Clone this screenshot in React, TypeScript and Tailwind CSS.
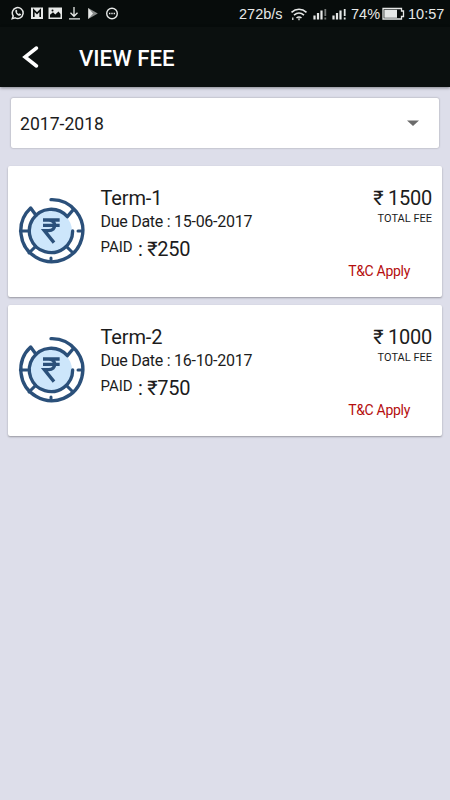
import React from "react";

type Fee = { term: string; due: string; paid: string; total: string };

const fees: Fee[] = [
  { term: "Term-1", due: "15-06-2017", paid: "250", total: "1500" },
  { term: "Term-2", due: "16-10-2017", paid: "750", total: "1000" },
];

function StatusBar() {
  return (
    <div className="flex h-[27px] items-center bg-[#070c0b] pl-[11px] pr-[6px] text-[#e6e8e7]">
      <svg width="110" height="15" viewBox="0 0 110 15" fill="none" className="shrink-0">
        <path d="M1.3 12.6 2.2 10A5.4 5.4 0 1 1 4.2 11.8Z" stroke="currentColor" strokeWidth="1.5" />
        <path d="M4.4 4.3c.8-.9 1.4-.5 2 .9l-.6.9c.5.9 1.2 1.5 2 1.9l.8-.7 1.6 1c-.3 1.5-1.7 1.7-3.1 1.1C5.200 8.500 4 6.500 4.400 4.300Z" fill="currentColor" />
        <path d="M20 1.500h12v11.500H20z" fill="currentColor" />
        <path d="M22.800 11V4.200L26 7.400l3.200-3.200V11" stroke="#070c0b" strokeWidth="1.6" />
        <path d="M37.500 1.500h13.500v11.500H37.500z" fill="currentColor" />
        <path d="M39 11.500V8.800l3-2.500 2.300 2.300 3.200-3.200 2 2.500v3.600z" fill="#070c0b" />
        <circle cx="41.500" cy="4.500" r="1" fill="#070c0b" />
        <path d="M63 1v9M59.500 6.800 63 10.300l3.500-3.500M58 12.800h11" stroke="currentColor" strokeWidth="1.3" />
        <path d="M77.300 2v11l9.500-5.500z" fill="#898c8b" />
        <path d="M77.300 2v11l4.700-5.500z" fill="currentColor" />
        <circle cx="101" cy="7.500" r="5.300" stroke="currentColor" strokeWidth="1.400" />
        <path d="M98 7.500h1.400m.9 0h1.400m.9 0h1.400" stroke="currentColor" strokeWidth="1.400" />
      </svg>
      <div className="ml-auto flex items-center font-['Liberation_Sans',sans-serif] text-[14.5px] leading-[18px]">
        <span className="w-[46px] whitespace-nowrap">272b/s</span>
        <svg width="66" height="16" viewBox="0 0 66 16" fill="none" className="shrink-0">
          <path d="M6.500 6.300c4.500-4 10.500-4 15 0M9 9.200c3-2.600 7-2.600 10 0M11.500 12c1.500-1.200 3.500-1.200 5 0" stroke="currentColor" strokeWidth="1.600" />
          <path d="M14 12.200v2M7.800 11.500v2.500" stroke="currentColor" strokeWidth="1.300" />
          <path d="M29.500 9.500v4M33 7V13.500M36.500 4.500V13.500M48.500 9.500v4M52 7V13.500M55.500 4.500V13.500" stroke="currentColor" strokeWidth="2.200" />
          <path d="M40.300 3v7m0 1.500v2" stroke="#777b79" strokeWidth="1.800" />
          <path d="M59.700 3v7m0 1.500v2" stroke="currentColor" strokeWidth="1.800" />
        </svg>
        <span className="w-[30px] whitespace-nowrap">74%</span>
        <svg width="27" height="14" viewBox="0 0 27 14" fill="none" className="shrink-0">
          <path d="M2 1.500H20.500v2.500h2v5.500h-2V12H2z" stroke="currentColor" strokeWidth="1.300" />
          <path d="M3.300 2.800h12.700v8H3.300z" fill="currentColor" />
        </svg>
        <span className="w-[36px] whitespace-nowrap">10:57</span>
      </div>
    </div>
  );
}

function CoinIcon() {
  return (
    <svg width="80" height="80" viewBox="0 0 240 240" fill="none" stroke="#2b507a" className="shrink-0">
      <circle cx="123" cy="123" r="63" fill="#cde6fb" stroke="none" />
      <path d="M123 29A93 93 0 1 1 62 54L78 76" strokeWidth="10" strokeLinecap="round" strokeLinejoin="round" />
      <path d="M188 123A65 65 0 1 1 172 80L189 60" strokeWidth="10" strokeLinecap="round" strokeLinejoin="round" />
      <path d="M31 123h27M204 123h10M123 204v10M77 169l-20 20M169 169l20 20" strokeWidth="9" strokeLinecap="round" />
      <path d="M99 90h50M99 106h50M99 90h17c24 0 24 32 0 32h-13l29 36" strokeWidth="10" />
    </svg>
  );
}

function FeeCard({ fee }: { fee: Fee }) {
  return (
    <article className="flex h-[131px] rounded-[2px] bg-white pl-[2px] pr-[10px] text-[#1c1c1c] shadow-[0_1px_2px_rgba(0,0,0,0.32)]">
      <div className="-ml-[0.5px] pt-[24px]">
        <CoinIcon />
      </div>
      <div className="ml-[11px] flex-1 whitespace-nowrap pt-[20px]">
        <h2 className="text-[20px] leading-[24px] tracking-[-0.15px]">{fee.term}</h2>
        <p className="mt-[2px] text-[16px] leading-[20px] tracking-[-0.270px]">Due Date : {fee.due}</p>
        <div className="mt-[4px] flex">
          <span className="w-[37.500px] text-[15px] leading-[22px]">PAID</span>
          <span className="pt-[1px] text-[20px] leading-[24px] tracking-[-0.300px]">: ₹{fee.paid}</span>
        </div>
      </div>
      <div className="flex flex-col items-end whitespace-nowrap pt-[20px]">
        <span className="text-[20px] leading-[24px] tracking-[-0.250px]">₹ {fee.total}</span>
        <span className="mt-px text-[11px] leading-[16px]">TOTAL FEE</span>
        <span className="mr-[22px] mt-[35px] text-[14px] leading-[18px] tracking-[-0.300px] text-[#b50e0e]">T&amp;C Apply</span>
      </div>
    </article>
  );
}

export default function App() {
  return (
    <div className="flex h-[800px] w-[450px] flex-col overflow-hidden bg-[#dddeea] font-['Roboto',sans-serif]">
      <StatusBar />
      <header className="flex h-[60px] shrink-0 items-center bg-[#0b100f] pl-[22px] text-white shadow-[0_1px_3px_rgba(0,0,0,0.4)]">
        <svg width="18" height="24" viewBox="0 0 18 24" fill="none">
          <path d="M14.500 3 3 12l11.500 9" stroke="currentColor" strokeWidth="3.500" strokeLinecap="round" strokeLinejoin="miter" />
        </svg>
        <h1 className="ml-[39px] mt-[2px] text-[22.200px] font-medium leading-[28px]">VIEW FEE</h1>
      </header>
      <main className="flex flex-col px-[8px] pt-[11px]">
        <button className="mx-[3px] flex h-[50px] items-center justify-between rounded-[2px] bg-white pl-[9px] pr-[20px] text-[17.600px] text-[#1c1c1c] shadow-[0_0_2px_rgba(0,0,0,0.35)]">
          <span className="pt-[2px]">2017-2018</span>
          <svg width="12" height="6" viewBox="0 0 12 6">
            <path d="M0 .5h12L6 6z" fill="#6b6b6b" />
          </svg>
        </button>
        <section className="mt-[18px] flex flex-col gap-[8px]">
          {fees.map((fee) => (
            <FeeCard key={fee.term} fee={fee} />
          ))}
        </section>
      </main>
    </div>
  );
}
